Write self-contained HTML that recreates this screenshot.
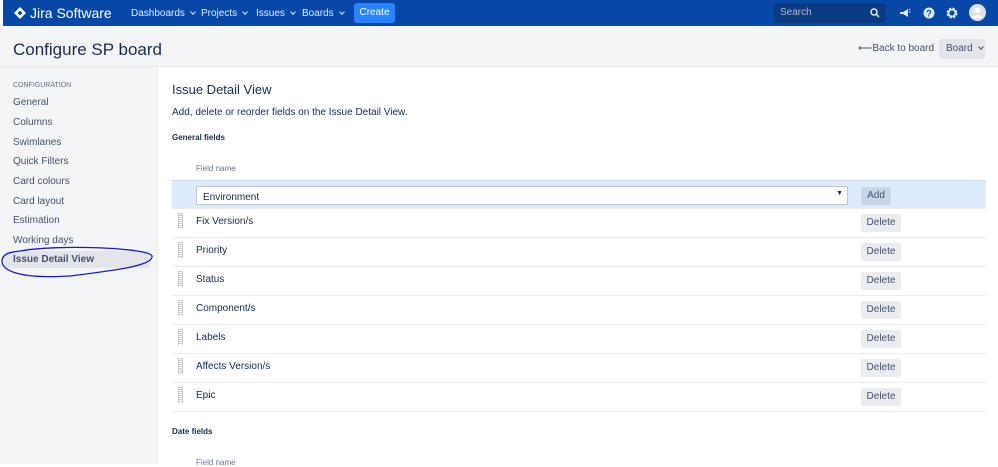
<!DOCTYPE html>
<html><head><style>
*{margin:0;padding:0;box-sizing:border-box}
body{width:998px;height:464px;overflow:hidden;font-family:"Liberation Sans",sans-serif;background:#fff;position:relative;color:#172b4d}
.nav{position:absolute;left:3px;top:0;width:995px;height:26px;background:#0747a6;color:#fff}
.nav span{position:absolute;top:8px;font-size:10px;color:#deebff;white-space:nowrap}
.chev{display:inline-block;width:4px;height:4px;border-right:1.5px solid #deebff;border-bottom:1.5px solid #deebff;transform:rotate(45deg);margin-left:6px;position:relative;top:-2px}
.hdr{position:absolute;left:0;top:26px;width:998px;height:41px;background:#f4f5f7;border-bottom:1px solid #e6e8ec}
.side{position:absolute;left:0;top:67px;width:158px;height:397px;background:#f4f5f7;border-right:1px solid #ebecf0}
.side div{position:absolute;left:13px;font-size:10px;color:#42526e}
.row{position:absolute;left:172px;width:814px;height:29px;border-bottom:1px solid #ebecf0;font-size:10px}
.row .t{position:absolute;left:24px;top:7px;color:#172b4d}
.grip{position:absolute;left:6px;top:4px;width:5px;height:16px;background:repeating-linear-gradient(#ccc 0 1px,transparent 1px 2px),#fff;border-left:1px dotted #ccc;border-right:1px dotted #ccc}
.btn{position:absolute;left:689px;top:5px;width:40px;height:18px;background:#ebecf0;border-radius:2px;font-size:10px;color:#42526e;text-align:center;line-height:18px}
</style></head><body>
<div class="nav">
<svg style="position:absolute;left:11px;top:7px" width="12" height="12" viewBox="0 0 12 12"><path d="M6 0L12 6L6 12L0 6Z" fill="#fff"/><path d="M6 3.5L8.5 6L6 8.5L3.5 6Z" fill="#0747a6"/></svg>
<span style="left:27px;top:5px;font-size:14px;color:#fff">Jira Software</span>
<span style="left:128px">Dashboards<i class="chev"></i></span>
<span style="left:198px">Projects<i class="chev"></i></span>
<span style="left:253px">Issues<i class="chev"></i></span>
<span style="left:299px">Boards<i class="chev"></i></span>
<div style="position:absolute;left:351px;top:3px;width:41px;height:20px;background:#2684ff;border-radius:3px;font-size:10px;line-height:20px;text-align:center">Create</div>
<div style="position:absolute;left:771px;top:3px;width:112px;height:20px;background:#0a3a82;border-radius:3px"><span style="left:6px;top:4px;font-size:10px;color:#b3bac5">Search</span><svg style="position:absolute;left:96px;top:5px" width="10" height="10" viewBox="0 0 10 10"><circle cx="4" cy="4" r="3" stroke="#deebff" stroke-width="1.5" fill="none"/><path d="M6 6L9 9" stroke="#deebff" stroke-width="1.5"/></svg></div>
<svg style="position:absolute;left:896px;top:7px" width="12" height="12" viewBox="0 0 12 12"><path d="M1 5h3l5-3v8L4 7H1z" fill="#deebff"/><path d="M10 3l1-1M10 5h1.5" stroke="#deebff"/></svg>
<svg style="position:absolute;left:920px;top:7px" width="12" height="12"><circle cx="6" cy="6" r="5.5" fill="#deebff"/><text x="6" y="9.5" font-size="9" text-anchor="middle" fill="#0747a6" font-weight="bold" font-family="Liberation Sans">?</text></svg>
<svg style="position:absolute;left:943px;top:7px" width="12" height="12"><circle cx="6" cy="6" r="4" fill="none" stroke="#deebff" stroke-width="3" stroke-dasharray="2 1.2"/><circle cx="6" cy="6" r="3.5" fill="none" stroke="#deebff" stroke-width="1.6"/></svg>
<svg style="position:absolute;left:966px;top:4px" width="17" height="17"><circle cx="8.5" cy="8.5" r="8.5" fill="#dfe1e6"/><circle cx="8.5" cy="6.5" r="3" fill="#fff"/><path d="M3 14c1-4 10-4 11 0" fill="#fff"/></svg>
</div>
<div class="hdr">
<div style="position:absolute;left:13px;top:14px;font-size:17px;color:#172b4d">Configure SP board</div>
<div style="position:absolute;left:858px;top:17px;font-size:10px;color:#42526e">⟵Back to board</div>
<div style="position:absolute;left:939px;top:13px;width:46px;height:20px;background:#e3e5e9;border-radius:3px;font-size:10px;color:#42526e;line-height:20px;padding-left:7px">Board<i class="chev" style="border-color:#42526e;width:4px;height:4px"></i></div>
</div>
<div class="side">
<div style="top:15px;font-size:7px;color:#5e6c84">CONFIGURATION</div>
<div style="top:30px">General</div>
<div style="top:50px">Columns</div>
<div style="top:70px">Swimlanes</div>
<div style="top:89px">Quick Filters</div>
<div style="top:109px">Card colours</div>
<div style="top:129px">Card layout</div>
<div style="top:148px">Estimation</div>
<div style="top:168px">Working days</div>
<div style="left:5px;top:184px;width:145px;height:17px;background:#e3e5ea;border-radius:2px"></div>
<div style="top:187px;font-weight:bold;color:#42526e">Issue Detail View</div>
<svg style="position:absolute;left:0;top:179px" width="156" height="34"><path d="M20 5C60 -2 150 2 152 10C154 20 110 25 70 30C20 33 2 25 2 15C2 8 10 6 20 5" fill="none" stroke="#1a1acf" stroke-width="1.3"/></svg>
</div>
<div style="position:absolute;left:172px;top:82px;font-size:13px;color:#172b4d">Issue Detail View</div>
<div style="position:absolute;left:172px;top:107px;font-size:10px;color:#172b4d">Add, delete or reorder fields on the Issue Detail View.</div>
<div style="position:absolute;left:172px;top:133px;font-size:8px;font-weight:bold;color:#172b4d">General fields</div>
<div style="position:absolute;left:196px;top:164px;font-size:8px;color:#6b778c">Field name</div>
<div class="row" style="top:180px;background:#deebff;border-top:1px solid #c9daf5">
<div style="position:absolute;left:24px;top:5px;width:652px;height:19px;background:#fff;border:1px solid #c1c7d0;border-radius:2px;font-size:10px;padding:5px 6px">Environment<span style="position:absolute;right:4px;top:3px;font-size:7px">▼</span></div>
<div class="btn" style="width:30px;background:#c9d6ea;top:6px">Add</div>
</div>
<div class="row" style="top:209px"><div class="grip"></div><div class="t">Fix Version/s</div><div class="btn">Delete</div></div>
<div class="row" style="top:238px"><div class="grip"></div><div class="t">Priority</div><div class="btn">Delete</div></div>
<div class="row" style="top:267px"><div class="grip"></div><div class="t">Status</div><div class="btn">Delete</div></div>
<div class="row" style="top:296px"><div class="grip"></div><div class="t">Component/s</div><div class="btn">Delete</div></div>
<div class="row" style="top:325px"><div class="grip"></div><div class="t">Labels</div><div class="btn">Delete</div></div>
<div class="row" style="top:354px"><div class="grip"></div><div class="t">Affects Version/s</div><div class="btn">Delete</div></div>
<div class="row" style="top:383px"><div class="grip"></div><div class="t">Epic</div><div class="btn">Delete</div></div>
<div style="position:absolute;left:172px;top:427px;font-size:8px;font-weight:bold;color:#172b4d">Date fields</div>
<div style="position:absolute;left:196px;top:458px;font-size:8px;color:#6b778c">Field name</div>
</body></html>
